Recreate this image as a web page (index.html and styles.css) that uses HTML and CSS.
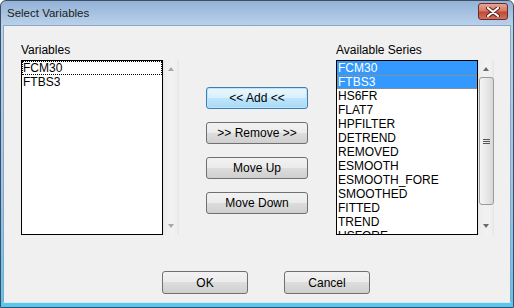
FILE: index.html
```html
<!DOCTYPE html>
<html lang="en">
<head>
  <meta charset="UTF-8" />
  <title>Select Variables</title>
  <link rel="stylesheet" href="styles.css">
</head>
<body>

  <div class="window">
    <div class="titlebar">
      <span class="title">Select Variables</span>
      <div class="closeBtn">
        <svg width="14" height="10" viewBox="0 0 14 10">
          <path d="M2 1 L12 9 M12 1 L2 9" stroke="#5a1a1a" stroke-width="4" stroke-linecap="round"/>
          <path d="M2 1 L12 9 M12 1 L2 9" stroke="#ffffff" stroke-width="2.2" stroke-linecap="round"/>
        </svg>
      </div>
    </div>

    <div class="client">
      <div class="mainRow">
        <div class="panel">
          <div class="label">Variables</div>
          <div class="listWrap">
            <ul class="listBox">
              <li class="focus">FCM30</li>
              <li>FTBS3</li>
            </ul>
            <div class="scrollbar disabled">
              <span class="arrow up"></span>
              <span class="arrow down"></span>
            </div>
          </div>
        </div>

        <div class="buttonCol">
          <button class="btn active">&lt;&lt; Add &lt;&lt;</button>
          <button class="btn">&gt;&gt; Remove &gt;&gt;</button>
          <button class="btn">Move Up</button>
          <button class="btn">Move Down</button>
        </div>

        <div class="panel">
          <div class="label">Available Series</div>
          <div class="listWrap">
            <ul class="listBox">
              <li class="selected">FCM30</li>
              <li class="selected focusSel">FTBS3</li>
              <li>HS6FR</li>
              <li>FLAT7</li>
              <li>HPFILTER</li>
              <li>DETREND</li>
              <li>REMOVED</li>
              <li>ESMOOTH</li>
              <li>ESMOOTH_FORE</li>
              <li>SMOOTHED</li>
              <li>FITTED</li>
              <li>TREND</li>
              <li>USFORE</li>
            </ul>
            <div class="scrollbar">
              <span class="arrow up"></span>
              <div class="thumb"><span class="grip"></span></div>
              <span class="arrow down"></span>
            </div>
          </div>
        </div>
      </div>

      <div class="footer">
        <button class="btn wide">OK</button>
        <button class="btn wide">Cancel</button>
      </div>
    </div>
  </div>

</body>
</html>
```

FILE: styles.css
```css
body {
  margin: 0;
  width: 514px;
  height: 308px;
  overflow: hidden;
  font-family: "Liberation Sans", Arial, sans-serif;
  font-size: 12px;
  color: #000;
}

.window {
  box-sizing: border-box;
  width: 514px;
  height: 308px;
  border: 1px solid #3d4e63;
  border-radius: 6px 6px 0 0;
  background: linear-gradient(to bottom, #93b2d7 0, #b9d1ea 24px, #9ec4ea 60%, #55c8ef 100%);
  display: flex;
  flex-direction: column;
  padding: 0 2px 4px 2px;
}

.titlebar {
  height: 24px;
  display: flex;
  align-items: center;
  justify-content: space-between;
  padding: 0 3px 0 4px;
}

.title {
  font-size: 11.5px;
  color: #1b1b1b;
  margin-top: -1px;
}

.closeBtn {
  width: 28px;
  height: 15px;
  margin-top: -3px;
  border: 1px solid #6b2a2a;
  border-radius: 3px;
  background: linear-gradient(to bottom, #e8a493 0, #d47a68 45%, #c04a34 55%, #d07260 100%);
  display: flex;
  align-items: center;
  justify-content: center;
}

.client {
  flex: 1;
  background: #f0f0f0;
  border: 1px solid #8aa6c4;
  border-bottom-color: #d6e6f2;
  padding: 17px 0 0 17px;
  display: flex;
  flex-direction: column;
}

.mainRow {
  display: flex;
}

.label {
  height: 14px;
  line-height: 14px;
  margin-bottom: 3px;
  color: #000;
}

.listWrap {
  display: flex;
  height: 175px;
}

.listBox {
  list-style: none;
  margin: 0;
  padding: 0;
  width: 140px;
  border: 1px solid #000;
  background: #fff;
  overflow: hidden;
}

.listBox li {
  height: 14px;
  line-height: 14px;
  padding-left: 1px;
  white-space: nowrap;
}

.listBox li.focus {
  outline: 1px dotted #000;
  outline-offset: -1px;
}

.listBox li.selected {
  background: #3399ff;
  color: #fff;
}

.listBox li.focusSel {
  outline: 1px dotted #c98a3d;
  outline-offset: -1px;
}

.scrollbar {
  width: 16px;
  position: relative;
  background: linear-gradient(to right, #e3e3e3 0, #eeeeee 2px, #f2f2f2 50%, #eeeeee 14px, #e3e3e3 16px);
  display: flex;
  flex-direction: column;
  align-items: center;
}

.arrow {
  position: absolute;
  left: 5px;
  width: 0;
  height: 0;
  border-left: 3.5px solid transparent;
  border-right: 3.5px solid transparent;
}

.arrow.up {
  top: 7px;
  border-bottom: 4px solid #6a6a6a;
}

.arrow.down {
  bottom: 7px;
  border-top: 4px solid #6a6a6a;
}

.scrollbar.disabled .arrow.up {
  border-bottom-color: #a8a8a8;
}

.scrollbar.disabled .arrow.down {
  border-top-color: #a8a8a8;
}

.thumb {
  box-sizing: border-box;
  margin-top: 17px;
  width: 15px;
  height: 128px;
  border: 1px solid #9a9a9a;
  border-radius: 3px;
  background: linear-gradient(to right, #f4f4f4 0, #e8e8e8 50%, #d8d8d8 100%);
  display: flex;
  align-items: center;
  justify-content: center;
}

.grip {
  width: 7px;
  height: 5px;
  background: repeating-linear-gradient(to bottom, #555 0, #555 1px, transparent 1px, transparent 2px);
}

.buttonCol {
  display: flex;
  flex-direction: column;
  gap: 13px;
  margin: 44px 28px 0 27px;
}

.btn {
  box-sizing: border-box;
  width: 102px;
  height: 22px;
  font-family: "Liberation Sans", Arial, sans-serif;
  font-size: 12px;
  color: #000;
  border: 1px solid #707070;
  border-radius: 3px;
  background: linear-gradient(to bottom, #f2f2f2 0, #ebebeb 50%, #dddddd 50%, #cfcfcf 100%);
  padding: 0;
}

.btn.active {
  border-color: #3c7fb1;
  box-shadow: inset 0 0 0 1px #bfe3f8;
  background: linear-gradient(to bottom, #eaf6fd 0, #d9f0fc 50%, #bee6fd 50%, #a7d9f5 100%);
}

.btn.wide {
  width: 86px;
  height: 23px;
}

.footer {
  display: flex;
  gap: 36px;
  margin: 36px 0 0 141px;
}
```
